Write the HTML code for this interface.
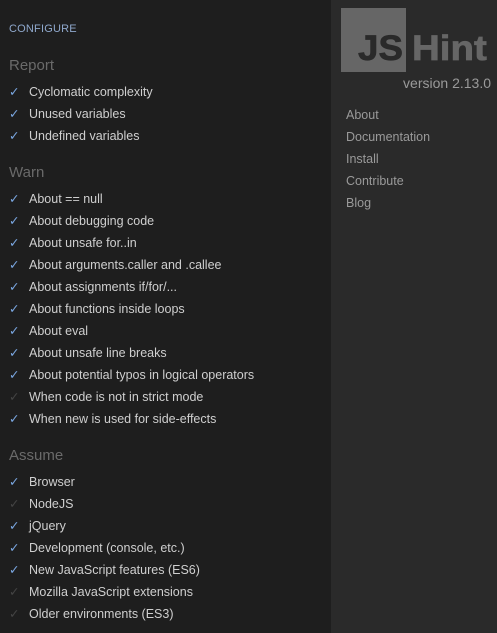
<!DOCTYPE html>
<html><head><meta charset="utf-8"><style>
html,body{margin:0;padding:0;}
body{width:497px;height:633px;background:#1e1e1e;font-family:"Liberation Sans",Arial,sans-serif;position:relative;overflow:hidden;}
.side{position:absolute;left:331px;top:0;width:166px;height:633px;background:#2a2a2a;}
.cfg{position:absolute;left:9px;top:23px;font-size:11px;color:#8fa8cc;letter-spacing:0.2px;}
.h{position:absolute;left:9px;font-size:15px;color:#6a6a6a;}
.i{position:absolute;left:9px;font-size:12.5px;color:#cfcfcf;white-space:nowrap;}
.i span{display:inline-block;width:20px;color:#7aa6e0;}
.i.off span{color:#444;}
.logo{position:absolute;left:341px;top:8px;width:65px;height:64px;background:#666;}
.js{position:absolute;left:358px;top:31px;font-size:35px;font-weight:bold;color:#2a2a2a;line-height:1;transform:scaleX(1.05);transform-origin:0 0;-webkit-text-stroke:0.7px #2a2a2a;}
.hint{position:absolute;left:412px;top:31px;font-size:35px;font-weight:bold;color:#666;line-height:1;transform:scaleX(1.1);transform-origin:0 0;-webkit-text-stroke:0.7px #666;}
.ver{position:absolute;right:6px;top:75px;font-size:14px;color:#9a9a9a;}
.nav{position:absolute;left:346px;font-size:12.5px;color:#9a9a9a;}
</style></head><body>
<div class="side"></div>
<div class="logo"></div>
<div class="js">JS</div>
<div class="hint">Hint</div>
<div class="ver">version 2.13.0</div>
<div class="nav" style="top:108px">About</div>
<div class="nav" style="top:130px">Documentation</div>
<div class="nav" style="top:152px">Install</div>
<div class="nav" style="top:174px">Contribute</div>
<div class="nav" style="top:196px">Blog</div>

<div class="cfg">CONFIGURE</div>
<div class="h" style="top:57px">Report</div>
<div class="i" style="top:84px"><span>✓</span>Cyclomatic complexity</div>
<div class="i" style="top:106px"><span>✓</span>Unused variables</div>
<div class="i" style="top:128px"><span>✓</span>Undefined variables</div>

<div class="h" style="top:164px">Warn</div>
<div class="i" style="top:191px"><span>✓</span>About == null</div>
<div class="i" style="top:213px"><span>✓</span>About debugging code</div>
<div class="i" style="top:235px"><span>✓</span>About unsafe for..in</div>
<div class="i" style="top:257px"><span>✓</span>About arguments.caller and .callee</div>
<div class="i" style="top:279px"><span>✓</span>About assignments if/for/...</div>
<div class="i" style="top:301px"><span>✓</span>About functions inside loops</div>
<div class="i" style="top:323px"><span>✓</span>About eval</div>
<div class="i" style="top:345px"><span>✓</span>About unsafe line breaks</div>
<div class="i" style="top:367px"><span>✓</span>About potential typos in logical operators</div>
<div class="i off" style="top:389px"><span>✓</span>When code is not in strict mode</div>
<div class="i" style="top:411px"><span>✓</span>When new is used for side-effects</div>

<div class="h" style="top:447px">Assume</div>
<div class="i" style="top:474px"><span>✓</span>Browser</div>
<div class="i off" style="top:496px"><span>✓</span>NodeJS</div>
<div class="i" style="top:518px"><span>✓</span>jQuery</div>
<div class="i" style="top:540px"><span>✓</span>Development (console, etc.)</div>
<div class="i" style="top:562px"><span>✓</span>New JavaScript features (ES6)</div>
<div class="i off" style="top:584px"><span>✓</span>Mozilla JavaScript extensions</div>
<div class="i off" style="top:606px"><span>✓</span>Older environments (ES3)</div>
</body></html>
